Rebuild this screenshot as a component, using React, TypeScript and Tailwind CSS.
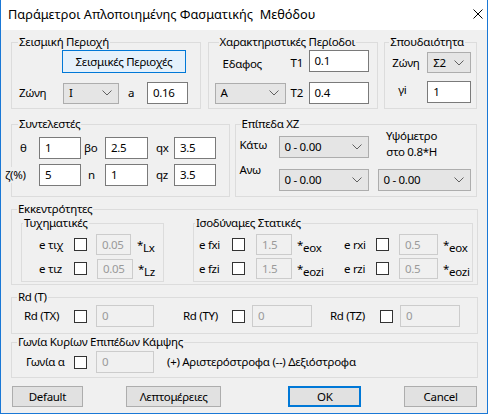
import type { ReactNode } from "react";

function Group({
  title,
  className,
  legend = "ml-[5px] leading-[16px]",
  children,
}: {
  title: string;
  className?: string;
  legend?: string;
  children?: ReactNode;
}) {
  return (
    <fieldset className={`border border-[#dcdcdc] ${className ?? ""}`}>
      <legend className={`px-[1px] ${legend}`}>{title}</legend>
      {children}
    </fieldset>
  );
}

function TextBox({ value, className, disabled }: { value: string; className?: string; disabled?: boolean }) {
  return (
    <div
      className={`flex items-center pl-[5px] ${
        disabled ? "border border-[#cccccc] bg-[#f0f0f0] text-[#9a9a9a]" : "border border-[#7a7a7a] bg-white text-black"
      } ${className ?? ""}`}
    >
      {value}
    </div>
  );
}

function Combo({ value, className }: { value: string; className?: string }) {
  return (
    <div
      className={`flex items-center justify-between border border-[#adadad] bg-[#e5e5e5] pl-[5px] pr-[6px] ${className ?? ""}`}
    >
      <span>{value}</span>
      <svg width="10" height="6" viewBox="0 0 10 6" className="shrink-0">
        <polyline points="0.5,0.5 5,5 9.5,0.5" fill="none" stroke="#606060" strokeWidth="1" />
      </svg>
    </div>
  );
}

function Check({ className }: { className?: string }) {
  return <div className={`h-[13px] w-[13px] shrink-0 border border-[#333333] bg-white ${className ?? ""}`} />;
}

function Btn({ label, className }: { label: string; className?: string }) {
  return (
    <div className={`flex h-[21px] items-center justify-center border ${className ?? ""}`}>{label}</div>
  );
}

export default function App() {
  return (
    <div
      className="flex h-[414px] w-[488px] flex-col overflow-hidden border-x border-b border-[#1a78d6] bg-[#f0f0f0] text-[11.5px] leading-[16px] tracking-[-0.3px] text-black"
      style={{ fontFamily: '"Noto Sans", "Liberation Sans", sans-serif' }}
    >
      {/* title bar */}
      <div className="flex h-[30px] shrink-0 items-center justify-between bg-white pb-[2px] pl-[7px] pr-[4px] text-[12.75px] tracking-normal">
        <span>Παράμετροι Απλοποιημένης Φασματικής&nbsp; Μεθόδου</span>
        <svg width="10" height="10" viewBox="0 0 10 10">
          <path d="M0.5 0.5 L9.5 9.5 M9.5 0.5 L0.5 9.5" stroke="#000" strokeWidth="1" />
        </svg>
      </div>

      <div className="flex flex-col px-[10px] pt-[4px]">
        {/* row 1 */}
        <div className="flex">
          <Group title="Σεισμική Περιοχή" legend="ml-[6px] leading-[16px]" className="h-[75px] w-[190px]">
            <Btn
              label="Σεισμικές Περιοχές"
              className="ml-[50px] h-[23px]! w-[124px] border-[#0078d7] bg-[#e5f1fb]"
            />
            <div className="mt-[9px] flex h-[22px] items-center">
              <span className="ml-[7px] w-[44px]">Ζώνη</span>
              <Combo value="I" className="h-[21px] w-[56px]" />
              <span className="ml-[9px] w-[19px]">a</span>
              <TextBox value="0.16" className="h-[22px] w-[41px]" />
            </div>
          </Group>

          <Group title="Χαρακτηριστικές Περίοδοι" legend="ml-[10px] leading-[16px]" className="ml-[7px] h-[75px] w-[171px]">
            <div className="flex h-[22px] items-center">
              <span className="ml-[14px] mt-[6px] w-[68px]">Εδαφος</span>
              <span className="mt-[4px] w-[18px]">T1</span>
              <TextBox value="0.1" className="h-[22px] w-[60px]" />
            </div>
            <div className="mt-[10px] flex h-[22px] items-center">
              <Combo value="A" className="ml-[6px] h-[21px] w-[71px]" />
              <span className="ml-[5px] w-[18px]">T2</span>
              <TextBox value="0.4" className="h-[22px] w-[60px]" />
            </div>
          </Group>

          <Group title="Σπουδαιότητα" legend="ml-[4px] leading-[16px]" className="ml-[6px] h-[75px] w-[93px]">
            <div className="mt-[2px] flex h-[21px] items-center">
              <span className="ml-[7px] w-[35px]">Ζώνη</span>
              <Combo value="Σ2" className="h-[21px] w-[44px]" />
            </div>
            <div className="mt-[8px] flex h-[22px] items-center">
              <span className="ml-[13px] -mt-[4px] w-[29px]">γi</span>
              <TextBox value="1" className="h-[22px] w-[44px]" />
            </div>
          </Group>
        </div>

        {/* row 2 */}
        <div className="mt-[7px] flex">
          <Group title="Συντελεστές" legend="ml-[6px] leading-[16px]" className="h-[81px] w-[219px]">
            <div className="mt-[5px] flex h-[22px] items-center">
              <span className="ml-[8px] w-[19px]">θ</span>
              <TextBox value="1" className="h-[22px] w-[42px]" />
              <span className="ml-[3px] w-[21px]">βο</span>
              <TextBox value="2.5" className="h-[22px] w-[43px]" />
              <span className="ml-[8px] w-[18px]">qx</span>
              <TextBox value="3.5" className="h-[22px] w-[42px]" />
            </div>
            <div className="mt-[5px] flex h-[22px] items-center">
              <span className="relative -ml-[7px] w-[34px] bg-[#f0f0f0]">ζ(%)</span>
              <TextBox value="5" className="h-[22px] w-[42px]" />
              <span className="ml-[7px] w-[17px]">n</span>
              <TextBox value="1" className="h-[22px] w-[43px]" />
              <span className="ml-[8px] w-[18px]">qz</span>
              <TextBox value="3.5" className="h-[22px] w-[42px]" />
            </div>
          </Group>

          <Group title="Επίπεδα XZ" legend="ml-[5px] leading-[16px]" className="ml-[5px] h-[81px] w-[243px]">
            <div className="mt-[4px] flex h-[22px] items-center">
              <span className="ml-[4px] -mt-[4px] w-[39px]">Κάτω</span>
              <Combo value="0 - 0.00" className="h-[22px] w-[90px]" />
              <div className="-mt-[8px] w-[86px] self-start text-center">
                Υψόμετρο
                <br />
                στο 0.8*Η
              </div>
            </div>
            <div className="mt-[11px] flex h-[22px] items-center">
              <span className="ml-[4px] -mt-[20px] w-[39px]">Ανω</span>
              <Combo value="0 - 0.00" className="h-[22px] w-[90px]" />
              <Combo value="0 - 0.00" className="ml-[9px] h-[22px] w-[93px]" />
            </div>
          </Group>
        </div>

        {/* row 3 */}
        <Group title="Εκκεντρότητες" legend="ml-[5px] leading-[14px]" className="mt-[5px] h-[83px] w-[467px]">
          <div className="flex">
            <Group title="Τυχηματικές" legend="ml-[1px] leading-[14px]" className="ml-[9px] h-[66px] w-[143px]">
              <div className="mt-[4px] flex h-[21px] items-center">
                <span className="ml-[17px] w-[35px]">e τιχ</span>
                <Check />
                <TextBox value="0.05" disabled className="ml-[9px] h-[21px] w-[35px]" />
                <span className="ml-[6px]">
                  *<span className="relative top-[3px]">Lx</span>
                </span>
              </div>
              <div className="mt-[3px] flex h-[21px] items-center">
                <span className="ml-[17px] w-[35px]">e τιz</span>
                <Check />
                <TextBox value="0.05" disabled className="ml-[10px] h-[20px] w-[36px]" />
                <span className="ml-[5px]">
                  *<span className="relative top-[3px]">Lz</span>
                </span>
              </div>
            </Group>

            <Group title="Ισοδύναμες Στατικές" legend="ml-[1px] leading-[14px]" className="ml-[29px] h-[66px] w-[280px]">
              <div className="mt-[4px] flex h-[21px] items-center">
                <span className="ml-[5px] w-[33px]">e fxi</span>
                <Check />
                <TextBox value="1.5" disabled className="ml-[11px] h-[21px] w-[36px]" />
                <span className="ml-[5px] w-[47px]">
                  *<span className="relative top-[3px]">eox</span>
                </span>
                <span className="w-[32px]">e rxi</span>
                <Check />
                <TextBox value="0.5" disabled className="ml-[10px] h-[21px] w-[39px]" />
                <span className="ml-[5px]">
                  *<span className="relative top-[3px]">eox</span>
                </span>
              </div>
              <div className="mt-[3px] flex h-[21px] items-center">
                <span className="ml-[5px] w-[33px]">e fzi</span>
                <Check />
                <TextBox value="1.5" disabled className="ml-[11px] h-[21px] w-[36px]" />
                <span className="ml-[5px] w-[47px]">
                  *<span className="relative top-[3px]">eozi</span>
                </span>
                <span className="w-[32px]">e rzi</span>
                <Check />
                <TextBox value="0.5" disabled className="ml-[10px] h-[21px] w-[39px]" />
                <span className="ml-[5px]">
                  *<span className="relative top-[3px]">eozi</span>
                </span>
              </div>
            </Group>
          </div>
        </Group>

        {/* Rd */}
        <Group title="Rd (T)" className="mt-[4px] h-[45px] w-[467px]">
          <div className="flex h-[22px] items-center">
            <span className="ml-[12px] w-[50px]">Rd (TX)</span>
            <Check />
            <TextBox value="0" disabled className="ml-[9px] h-[22px] w-[58px]" />
            <span className="ml-[29px] w-[49px]">Rd (TY)</span>
            <Check />
            <TextBox value="0" disabled className="ml-[7px] h-[22px] w-[60px]" />
            <span className="ml-[18px] w-[50px]">Rd (TZ)</span>
            <Check />
            <TextBox value="0" disabled className="ml-[7px] h-[22px] w-[60px]" />
          </div>
        </Group>

        {/* Γωνία */}
        <Group title="Γωνία Κυρίων Επιπέδων Κάμψης" className="h-[44px] w-[467px]">
          <div className="mt-[1px] flex h-[22px] items-center">
            <span className="ml-[14px] w-[48px]">Γωνία α</span>
            <Check />
            <TextBox value="0" disabled className="ml-[9px] h-[22px] w-[58px]" />
            <span className="ml-[13px]">(+) Αριστερόστροφα (--) Δεξιόστροφα</span>
          </div>
        </Group>

        {/* buttons */}
        <div className="mt-[8px] flex">
          <Btn label="Default" className="ml-[1px] w-[72px] border-[#adadad] bg-[#e1e1e1]" />
          <Btn label="Λεπτομέρειες" className="ml-[43px] w-[97px] border-[#adadad] bg-[#e1e1e1]" />
          <Btn label="OK" className="ml-[67px] w-[74px] border-2 border-[#0078d7] bg-[#e1e1e1]" />
          <Btn label="Cancel" className="ml-[43px] w-[74px] border-[#adadad] bg-[#e1e1e1]" />
        </div>
      </div>
    </div>
  );
}
